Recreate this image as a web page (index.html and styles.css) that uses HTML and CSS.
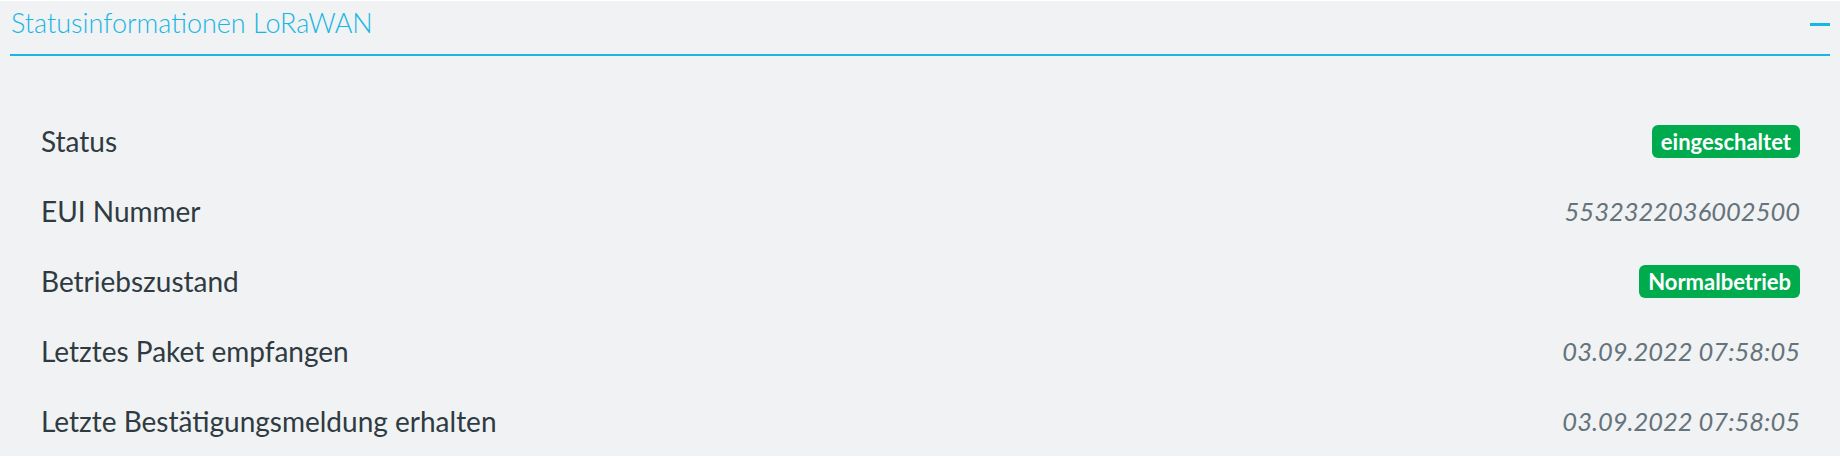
FILE: index.html
```html
<!DOCTYPE html>
<html lang="de">
<head>
    <meta charset="UTF-8">
    <meta name="viewport" content="width=device-width, initial-scale=1.0">
    <title>Statusinformationen LoRaWAN</title>
    <link rel="stylesheet" href="styles.css">
</head>
<body>
    <div class="panel">
        <div class="panel-head">
            <h2>Statusinformationen LoRaWAN</h2>
            <span class="collapse" title="Einklappen"></span>
        </div>

        <div class="info-list">
            <div class="info-row">
                <span class="label">Status</span>
                <span class="badge">eingeschaltet</span>
            </div>
            <div class="info-row">
                <span class="label">EUI Nummer</span>
                <span class="value">5532322036002500</span>
            </div>
            <div class="info-row">
                <span class="label">Betriebszustand</span>
                <span class="badge">Normalbetrieb</span>
            </div>
            <div class="info-row">
                <span class="label">Letztes Paket empfangen</span>
                <span class="value">03.09.2022 07:58:05</span>
            </div>
            <div class="info-row">
                <span class="label">Letzte Bestätigungsmeldung erhalten</span>
                <span class="value">03.09.2022 07:58:05</span>
            </div>
        </div>
    </div>
</body>
</html>
```

FILE: styles.css
```css
body {
    margin: 0;
    padding: 1px 0 2px;
    background: #fff;
    font-family: Lato, "Open Sans", sans-serif;
}
.panel {
    background: #f0f2f4;
    padding: 0 10px;
}
.panel-head {
    display: flex;
    justify-content: space-between;
    align-items: flex-start;
    height: 53px;
    border-bottom: 2px solid #17b6e3;
}
.panel-head h2 {
    margin: 5px 0 0 1px;
    font-size: 27px;
    font-weight: 300;
    color: #17b6e3;
}
.collapse {
    width: 20px;
    height: 3px;
    margin-top: 22px;
    background: #17b6e3;
}
.info-list {
    padding: 50px 30px 0 31px;
}
.info-row {
    display: flex;
    justify-content: space-between;
    align-items: center;
    height: 70px;
}
.label {
    font-size: 28px;
    color: #2f3b41;
}
.value {
    font-size: 25.5px;
    font-style: italic;
    color: #65737a;
}
.badge {
    display: inline-block;
    height: 33px;
    line-height: 33px;
    padding: 0 9px;
    border-radius: 6px;
    background: #00ab4e;
    color: #fff;
    font-size: 22px;
    font-weight: 700;
}
```
